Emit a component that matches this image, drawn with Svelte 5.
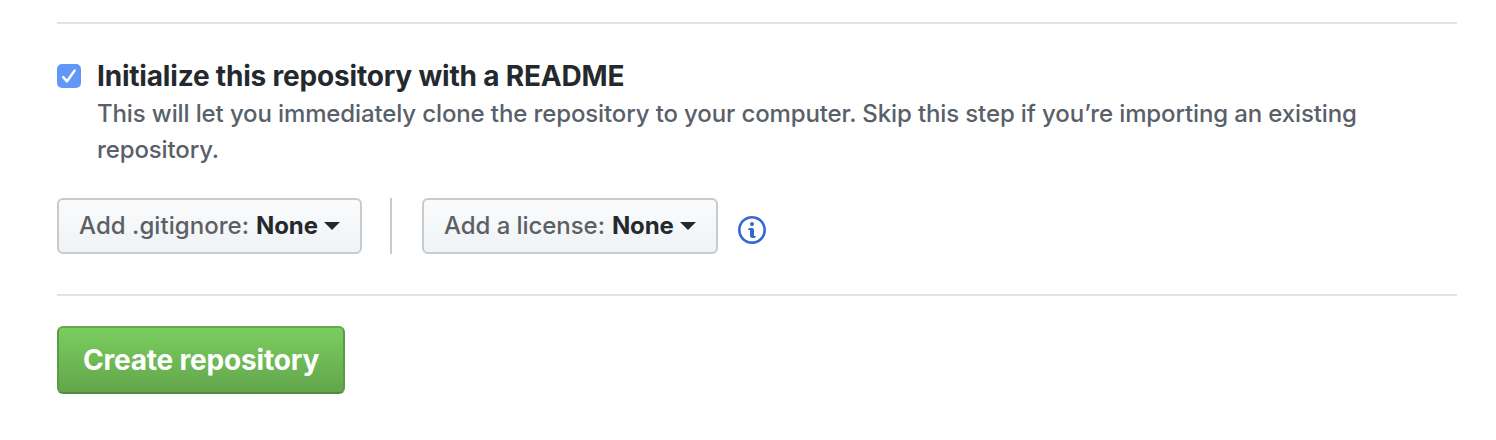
<script>
  const menus = [
    { id: 'ignore', label: 'Add .gitignore:', value: 'None' },
    { id: 'license', label: 'Add a license:', value: 'None' }
  ];
</script>

<main>
  <hr />
  <section class="readme">
    <span class="box" role="checkbox" aria-checked="true" aria-labelledby="readme-title" tabindex="0">
      <svg width="24" height="24" viewBox="0 0 24 24"><path d="M6.2 13.2 10 17.3 17.6 6.6" /></svg>
    </span>
    <div class="copy">
      <div class="title" id="readme-title"><span>Initialize this repository with a README</span></div>
      <p><span>This will let you immediately clone the repository to your computer. Skip this step if you’re importing an existing</span><br /><span>repository.</span></p>
    </div>
  </section>

  <section class="options">
    {#each menus as menu, i}
      {#if i}<span class="divider"></span>{/if}
      <button class="select {menu.id}">
        <span class="label">{menu.label}</span>
        <b>{menu.value}</b>
        <span class="caret"></span>
      </button>
    {/each}
    <svg class="info" width="28" height="32" viewBox="0 0 14 16"><path fill-rule="evenodd" d="M6.3 5.69a.942.942 0 0 1-.28-.7c0-.28.09-.52.28-.7.19-.18.42-.28.7-.28.28 0 .52.09.7.28.18.19.28.42.28.7 0 .28-.09.52-.28.7a1 1 0 0 1-.7.3c-.28 0-.52-.11-.7-.3zM8 7.99c-.02-.25-.11-.48-.31-.69-.2-.19-.42-.3-.69-.31H6c-.27.02-.48.13-.69.31-.2.2-.3.44-.31.69h1v3c.02.27.11.5.31.69.2.2.42.31.69.31h1c.27 0 .48-.11.69-.31.2-.19.3-.42.31-.69H8V7.98v.01zM7 2.3c-3.14 0-5.7 2.54-5.7 5.68 0 3.14 2.56 5.7 5.7 5.7s5.7-2.55 5.7-5.7c0-3.15-2.56-5.69-5.7-5.69v.01zM7 .98c3.86 0 7 3.14 7 7s-3.14 7-7 7-7-3.12-7-7 3.14-7 7-7z" /></svg>
  </section>

  <hr />
  <button class="create">Create repository</button>
</main>

<style>
  :global(body) { background: #fff; }
  main {
    box-sizing: border-box;
    height: 440px;
    padding: 22px 39px 0 57px;
    font-family: Inter, sans-serif;
    color: #24292e;
    white-space: nowrap;
    overflow: hidden;
  }
  hr { margin: 0; border: 0; height: 2px; background: #e1e1e6; }
  button { box-sizing: border-box; margin: 0; font-family: inherit; white-space: nowrap; }
  .readme { display: flex; gap: 16px; padding-top: 34px; height: 140px; }
  .box {
    width: 24px; height: 24px; margin-top: 6px; flex: none;
    border-radius: 5px; background: #6197f9;
  }
  .box svg { display: block; }
  .box path { fill: none; stroke: #fff; stroke-width: 2.5; stroke-linecap: round; stroke-linejoin: round; }
  .title { font-size: 28px; line-height: 36px; padding-bottom: 2px; font-weight: 650; letter-spacing: -0.19px; }
  p { margin: 0; font-size: 24px; line-height: 36px; font-weight: 450; letter-spacing: -0.125px; color: #586069; }
  .options { display: flex; height: 96px; }
  .select {
    display: flex; align-items: center; height: 56px; padding: 0 0 0 20px;
    border: 2px solid #c8cacc; border-radius: 6px;
    background: linear-gradient(#fafbfc, #eff3f6) border-box;
    font-size: 24px; line-height: 36px; color: #24292e;
  }
  .ignore { width: 305px; }
  .license { width: 296px; }
  .label { color: #5d6062; font-weight: 450; letter-spacing: -0.06px; }
  .ignore .label { letter-spacing: 0.05px; }
  b { font-weight: 650; margin: 0 6px 0 7px; letter-spacing: -0.1px; }
  .caret { border: 8px solid transparent; border-top-color: #24292e; border-bottom: 0; }
  .divider { width: 2px; height: 56px; margin: 0 30px 0 28px; background: #ccc; }
  .info { margin: 16px 0 0 20px; fill: #3566d6; }
  .create {
    display: block; width: 288px; height: 68px; margin-top: 30px; padding: 0;
    border: 2px solid; border-color: #62ab4c #5b9b47 #528b40; border-radius: 6px;
    background: linear-gradient(#7bcf60, #62a44b) border-box;
    color: #fff; font-size: 28px; line-height: 60px; font-weight: 650; letter-spacing: -0.18px;
  }
</style>
